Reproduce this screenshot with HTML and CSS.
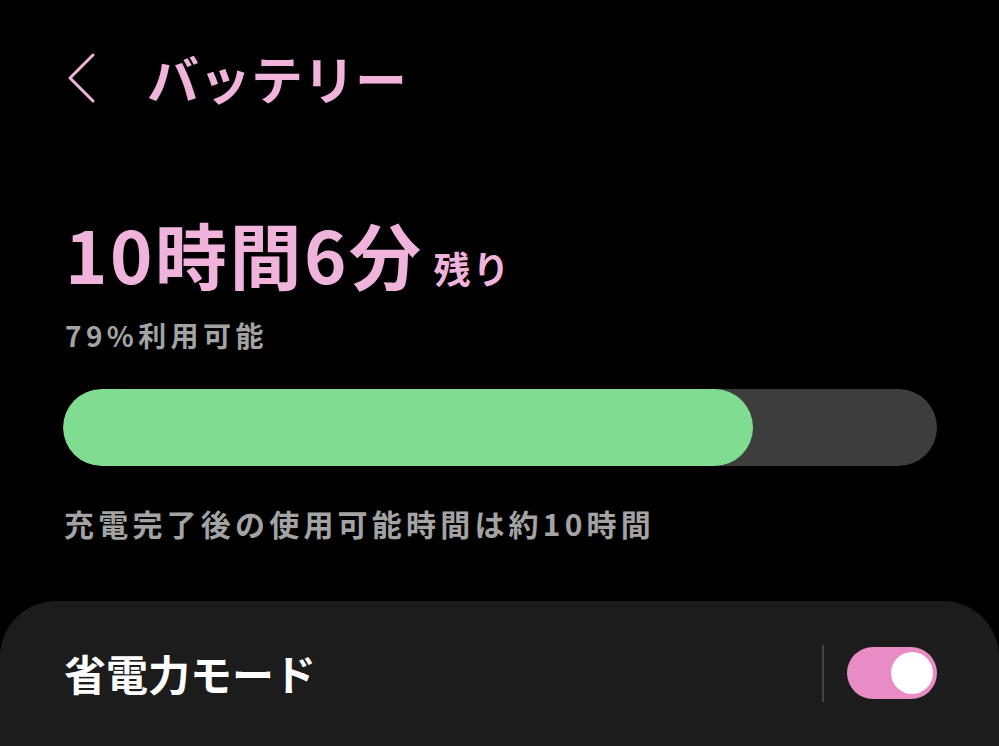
FILE: index.html
```html
<!DOCTYPE html>
<html lang="ja">
<head>
  <meta charset="UTF-8">
  <title>バッテリー</title>
  <link rel="stylesheet" href="styles.css">
</head>
<body>
<div class="page">
  <!--ヘッダー-->
  <div class="header">
    <span class="back">
      <svg width="30" height="52" viewBox="0 0 30 52">
        <polyline points="27,3 4,26 27,49" fill="none" stroke="#f0b3dc" stroke-width="3" stroke-linecap="round" stroke-linejoin="round"/>
      </svg>
    </span>
    <h1 class="title">バッテリー</h1>
  </div>

  <!--残り時間-->
  <div class="summary">
    <div class="remain"><span class="big">10時間6分</span><span class="small">残り</span></div>
    <div class="percent">79%利用可能</div>
    <div class="bar">
      <div class="fill" style="width: 79%"></div>
    </div>
    <div class="note">充電完了後の使用可能時間は約10時間</div>
  </div>

  <!--省電力モード-->
  <div class="card">
    <div class="row">
      <span class="label">省電力モード</span>
      <span class="divider"></span>
      <span class="switch on"><span class="knob"></span></span>
    </div>
  </div>
</div>
</body>
</html>
```
FILE: styles.css
```css
* {
  margin: 0;
  padding: 0;
  box-sizing: border-box;
}

html, body {
  background-color: #000;
  height: 100%;
}

body {
  font-family: "Noto Sans CJK JP", "Noto Sans", sans-serif;
  font-weight: 700;
  overflow: hidden;
}

.page {
  width: 999px;
  height: 746px;
  display: flex;
  flex-direction: column;
}

.header {
  display: flex;
  align-items: center;
  padding: 52px 0 0 66px;
  height: 104px;
}

.back {
  width: 30px;
  height: 52px;
  display: flex;
}

.title {
  margin-left: 51px;
  font-size: 52px;
  line-height: 52px;
  color: #f0b3dc;
  font-weight: 700;
}

.summary {
  padding: 0 62px 0 63px;
}

.remain {
  margin-top: 113px;
  padding-left: 2px;
  display: flex;
  align-items: baseline;
  color: #f0b3dc;
}

.big {
  font-size: 72px;
  line-height: 72px;
  letter-spacing: 2.5px;
}

.small {
  font-size: 37px;
  margin-left: 10px;
  letter-spacing: 2px;
}

.percent {
  margin-top: 25px;
  padding-left: 2px;
  font-size: 28px;
  line-height: 30px;
  letter-spacing: 4.4px;
  color: #a3a3a3;
}

.bar {
  margin-top: 39px;
  height: 77px;
  border-radius: 39px;
  background-color: #3d3d3d;
  overflow: hidden;
}

.fill {
  height: 100%;
  border-radius: 39px;
  background-color: #80dc90;
}

.note {
  margin-top: 40px;
  padding-left: 1px;
  font-size: 30px;
  line-height: 34px;
  letter-spacing: 4.2px;
  color: #a3a3a3;
}

.card {
  margin-top: 61px;
  flex: 1;
  background-color: #1c1c1c;
  border-radius: 56px 56px 0 0;
  padding: 43px 62px 0 64px;
}

.row {
  display: flex;
  align-items: center;
  height: 58px;
}

.label {
  flex: 1;
  font-size: 42px;
  line-height: 48px;
  color: #fff;
}

.divider {
  width: 2px;
  height: 57px;
  background-color: #444;
  margin-right: 23px;
}

.switch {
  width: 90px;
  height: 52px;
  border-radius: 26px;
  background-color: #e98cc6;
  display: flex;
  align-items: center;
  justify-content: flex-end;
  padding-right: 4px;
}

.knob {
  width: 42px;
  height: 42px;
  border-radius: 50%;
  background-color: #fff;
}
```
